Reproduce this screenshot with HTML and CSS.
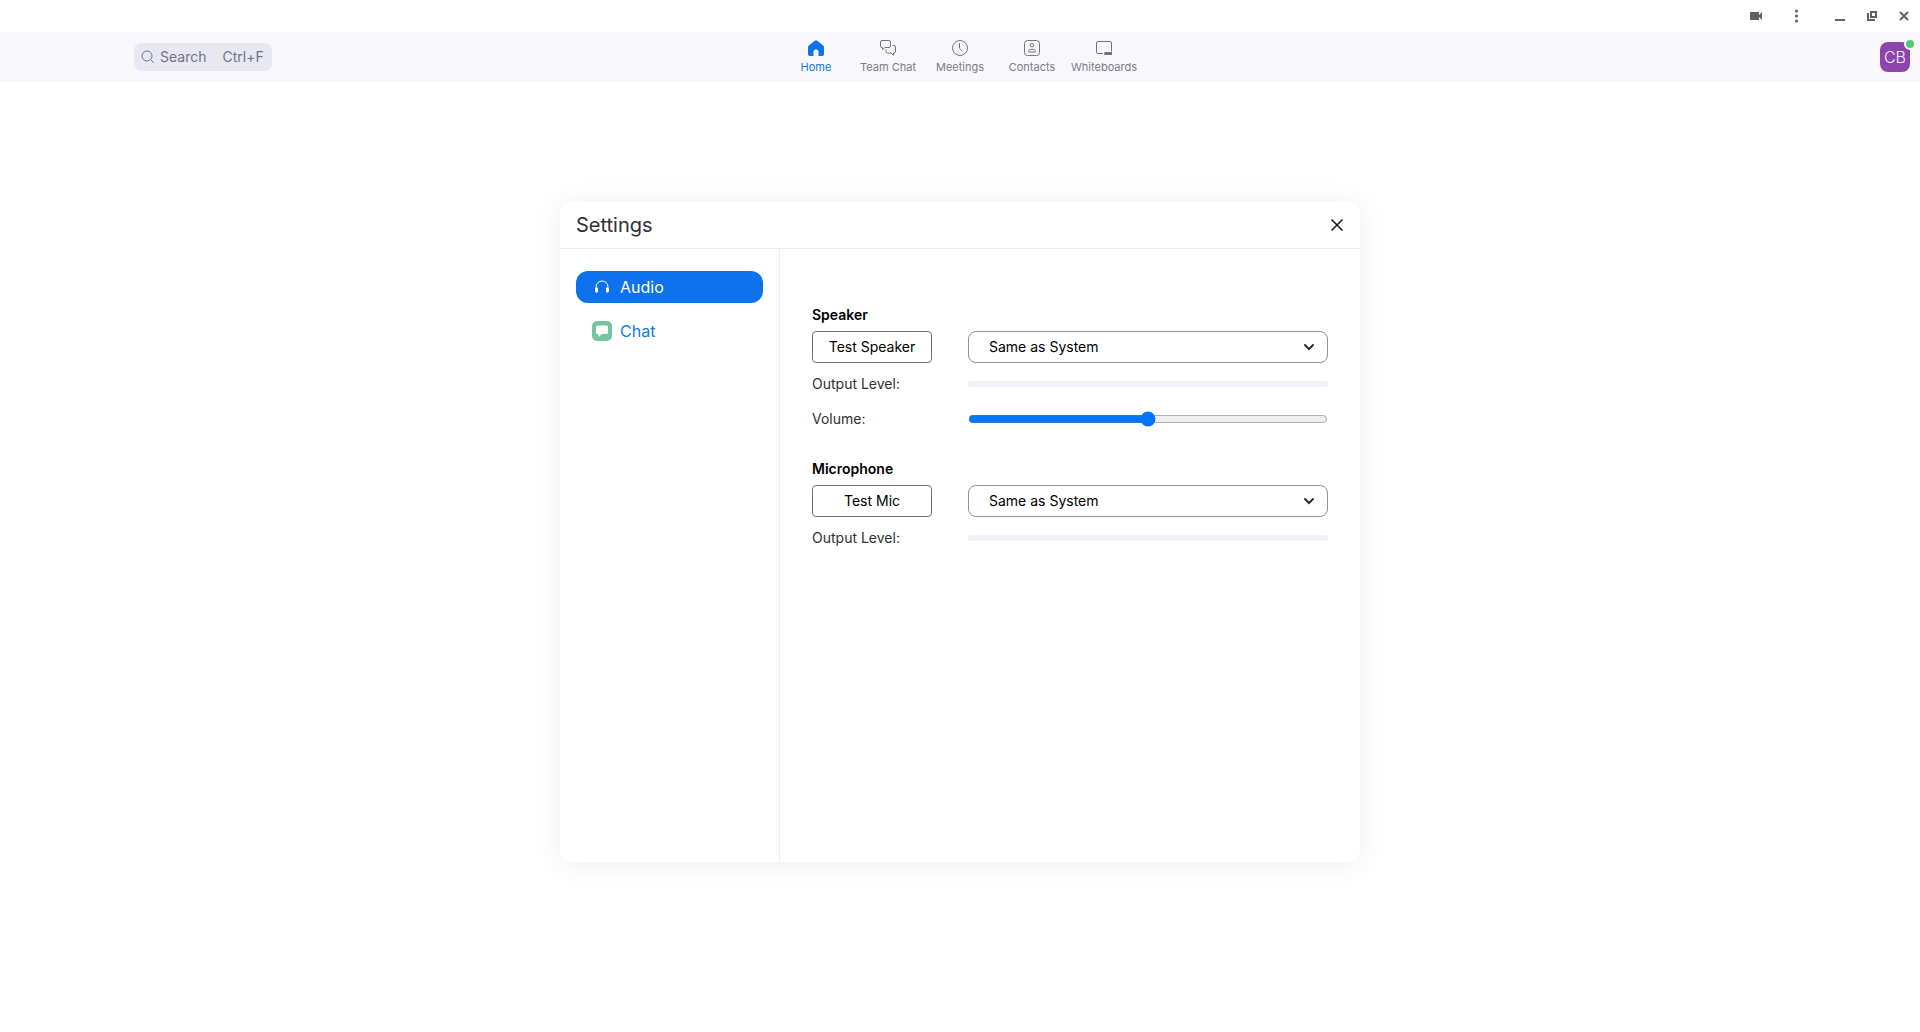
FILE: index.html
```html
<!DOCTYPE html>
<html lang="en">
<head>
    <meta charset="UTF-8">
    <meta name="viewport" content="width=device-width, initial-scale=1.0">
    <title>Settings</title>
    <link rel="stylesheet" href="styles.css">
</head>
<body>
    <div class="titlebar">
        <button class="window-btn camera" aria-label="Camera">
            <svg width="16" height="16" viewBox="0 0 16 16"><path d="M2 4h9v3l3-3v8l-3-3v3H2z" fill="#5f6368"/></svg>
        </button>
        <button class="window-btn more" aria-label="More">
            <svg width="16" height="16" viewBox="0 0 16 16" fill="#5f6368"><circle cx="8.500" cy="3" r="1.600"/><circle cx="8.500" cy="8" r="1.600"/><circle cx="8.500" cy="13" r="1.600"/></svg>
        </button>
        <button class="window-btn" aria-label="Minimize">
            <svg width="16" height="16" viewBox="0 0 16 16"><path d="M3 11h10v2H3z" fill="#5f6368"/></svg>
        </button>
        <button class="window-btn" aria-label="Restore">
            <svg width="16" height="16" viewBox="0 0 16 16" fill="none" stroke="#5f6368" stroke-width="2"><path d="M7 4h5v5H7zM4 5v7h7"/></svg>
        </button>
        <button class="window-btn" aria-label="Close window">
            <svg width="16" height="16" viewBox="0 0 16 16" fill="none" stroke="#5f6368" stroke-width="2"><path d="M4 4l8 8M12 4l-8 8"/></svg>
        </button>
    </div>

    <div class="app">
        <header class="header">
            <button class="search">
                <svg width="14" height="14" viewBox="0 0 14 14" fill="none" stroke="#747480"><circle cx="6" cy="6" r="5"/><path d="M9.800 9.800l3 3"/></svg>
                <span>Search</span>
                <span class="shortcut">Ctrl+F</span>
            </button>
            <nav class="nav">
                <a href="#" class="nav-item active">
                    <svg width="16" height="16" viewBox="0 0 16 16"><path d="M8 .3c.5 0 .9.2 1.300.5l5.800 4.800c.6.5.9 1.100.9 1.900V14a2 2 0 0 1-2 2h-3.500v-4.500a2 2 0 0 0-2-2h-1a2 2 0 0 0-2 2V16H2a2 2 0 0 1-2-2V7.500c0-.8.3-1.400.9-1.900L6.700.8C7.100.5 7.500.3 8 .3z" fill="#0e72ed"/></svg>
                    <span>Home</span>
                </a>
                <a href="#" class="nav-item">
                    <svg width="16" height="16" viewBox="0 0 16 16" fill="none" stroke="#747480" stroke-linejoin="round"><path d="M2 .5h7a1.500 1.500 0 0 1 1.500 1.500v4A1.500 1.500 0 0 1 9 7.500H5L2.500 9.800V7.500H2A1.500 1.500 0 0 1 .5 6V2A1.500 1.500 0 0 1 2 .5z"/><path d="M12.500 5.500H14A1.500 1.500 0 0 1 15.500 7v4.500A1.500 1.500 0 0 1 14 13h-.5v2.400L11 13H7.500A1.500 1.500 0 0 1 6 11.500V9.500"/></svg>
                    <span>Team Chat</span>
                </a>
                <a href="#" class="nav-item">
                    <svg width="16" height="16" viewBox="0 0 16 16" fill="none" stroke="#747480"><circle cx="8" cy="8" r="7.500"/><path d="M7.500 3v5.200l3 3"/></svg>
                    <span>Meetings</span>
                </a>
                <a href="#" class="nav-item">
                    <svg width="16" height="16" viewBox="0 0 16 16" fill="none" stroke="#747480"><rect x=".5" y=".5" width="15" height="15" rx="3"/><circle cx="8" cy="5.200" r="1.700"/><path d="M4.500 12v-.5c0-1.400 1-2.200 2.200-2.200h2.600c1.200 0 2.200.8 2.200 2.200v.5z" stroke-linejoin="round"/></svg>
                    <span>Contacts</span>
                </a>
                <a href="#" class="nav-item">
                    <svg width="16" height="16" viewBox="0 0 16 16" fill="none" stroke="#747480"><path d="M7 13.500H2A1.500 1.500 0 0 1 .5 12V3A1.500 1.500 0 0 1 2 1.500h12A1.500 1.500 0 0 1 15.500 3v8.500"/><path d="M9.500 12H16v3H9.500a1.500 1.500 0 0 1 0-3z" fill="#747480" stroke="none"/></svg>
                    <span>Whiteboards</span>
                </a>
            </nav>
            <button class="avatar" aria-label="Profile">CB<span class="presence"></span></button>
        </header>

        <div class="overlay">
            <section class="settings" role="dialog" aria-labelledby="settings-title">
                <div class="settings-header">
                    <h1 id="settings-title">Settings</h1>
                    <button class="close" aria-label="Close">
                        <svg width="14" height="14" viewBox="0 0 14 14" fill="none" stroke="#131619" stroke-width="1.500"><path d="M1.500 1.500l11 11M12.500 1.500l-11 11"/></svg>
                    </button>
                </div>
                <div class="settings-body">
                    <nav class="sidebar">
                        <a href="#" class="side-item active">
                            <svg width="20" height="20" viewBox="0 0 20 20" fill="none" stroke="#fff"><path d="M4 11.500V10a6 6 0 0 1 12 0v1.500"/><path d="M4.700 10.500c.8 0 1.300.5 1.300 1.300v2.400c0 .8-.5 1.300-1.300 1.300-1 0-1.700-.8-1.700-1.800v-1.400c0-1 .7-1.800 1.700-1.800zM15.300 10.500c-.8 0-1.300.5-1.300 1.300v2.400c0 .8.5 1.300 1.300 1.300 1 0 1.700-.8 1.700-1.800v-1.400c0-1-.7-1.800-1.700-1.800z" fill="#fff" stroke="none"/></svg>
                            <span>Audio</span>
                        </a>
                        <a href="#" class="side-item">
                            <svg width="20" height="20" viewBox="0 0 20 20"><rect width="20" height="20" rx="5" fill="#75c3a3"/><path d="M5.500 4.500h9A1.500 1.500 0 0 1 16 6v5.500a1.500 1.500 0 0 1-1.500 1.500H10l-3.500 3V13h-1A1.500 1.500 0 0 1 4 11.500V6a1.500 1.500 0 0 1 1.500-1.500z" fill="#fff"/></svg>
                            <span>Chat</span>
                        </a>
                    </nav>
                    <div class="content">
                        <div class="group">
                            <h2 id="speaker">Speaker</h2>
                            <div class="row device">
                                <button class="test-btn">Test Speaker</button>
                                <div class="select">
                                    <select aria-labelledby="speaker">
                                        <option>Same as System</option>
                                    </select>
                                    <svg width="10" height="8" viewBox="0 0 10 8" fill="none" stroke="#2a2b33" stroke-width="2"><path d="M1 2l4 4 4-4" stroke-linecap="round"/></svg>
                                </div>
                            </div>
                            <div class="row">
                                <span>Output Level:</span>
                                <div class="level"></div>
                            </div>
                            <div class="row">
                                <label for="volume">Volume:</label>
                                <input type="range" id="volume" min="0" max="100" value="50">
                            </div>
                        </div>
                        <div class="group">
                            <h2 id="microphone">Microphone</h2>
                            <div class="row device">
                                <button class="test-btn">Test Mic</button>
                                <div class="select">
                                    <select aria-labelledby="microphone">
                                        <option>Same as System</option>
                                    </select>
                                    <svg width="10" height="8" viewBox="0 0 10 8" fill="none" stroke="#2a2b33" stroke-width="2"><path d="M1 2l4 4 4-4" stroke-linecap="round"/></svg>
                                </div>
                            </div>
                            <div class="row">
                                <span>Output Level:</span>
                                <div class="level"></div>
                            </div>
                        </div>
                    </div>
                </div>
            </section>
        </div>
    </div>
</body>
</html>
```
FILE: styles.css
```css
* {
    box-sizing: border-box;
}

body {
    margin: 0;
    min-height: 100vh;
    display: flex;
    flex-direction: column;
    background: #fff;
    color: #303033;
    font-family: Inter, "Liberation Sans", sans-serif;
    font-size: 14px;
    line-height: 20px;
}

button,
select {
    font: inherit;
    cursor: pointer;
}

a {
    text-decoration: none;
}

svg {
    display: block;
    flex: none;
}

/* window controls */
.titlebar {
    display: flex;
    justify-content: flex-end;
    align-items: center;
    gap: 16px;
    height: 32px;
    padding-right: 8px;
}

.window-btn {
    padding: 0;
    border: none;
    background: none;
}

.camera {
    margin-right: 8px;
}

.more {
    margin-right: 12px;
}

.app {
    position: relative;
    flex: 1;
}

/* top bar */
.header {
    display: grid;
    grid-template-columns: 1fr auto 1fr;
    align-items: center;
    height: 50px;
    padding: 0 10px;
    background: #f7f7fc;
}

.search {
    display: flex;
    align-items: center;
    justify-self: start;
    gap: 5px;
    height: 28px;
    margin-left: 124px;
    padding: 0 8px 0 7px;
    border: none;
    border-radius: 8px;
    background: #e8e8f2;
    color: #747480;
}

.shortcut {
    margin-left: 11px;
}

.nav {
    display: flex;
}

.nav-item {
    display: flex;
    flex-direction: column;
    align-items: center;
    gap: 4px;
    width: 72px;
    color: #7c7c86;
    font-size: 11px;
    line-height: 14px;
}

.nav-item.active {
    color: #0e78e0;
}

.avatar {
    position: relative;
    justify-self: end;
    width: 30px;
    height: 30px;
    padding: 0;
    border: none;
    border-radius: 8px;
    background: #8e44ad;
    color: #f6eefa;
    font-size: 16px;
    font-weight: 300;
}

.presence {
    position: absolute;
    top: -4px;
    right: -6px;
    width: 12px;
    height: 12px;
    border: 2px solid #f7f7fc;
    border-radius: 50%;
    background: #4fc878;
}

/* settings dialog */
.overlay {
    position: absolute;
    inset: 0;
    display: flex;
    justify-content: center;
    align-items: center;
    pointer-events: none;
}

.settings {
    display: flex;
    flex-direction: column;
    width: 100%;
    max-width: 800px;
    height: 66%;
    border-radius: 12px;
    background: #fff;
    box-shadow: 0 2px 30px rgba(0, 0, 0, 0.07);
    pointer-events: auto;
}

.settings-header {
    display: flex;
    justify-content: space-between;
    align-items: center;
    height: 47px;
    padding: 0 16px;
    border-bottom: 1px solid #ededf4;
}

.settings-header h1 {
    margin: 0;
    font-size: 20px;
    font-weight: 400;
    line-height: 24px;
}

.close {
    padding: 0;
    border: none;
    background: none;
}

.settings-body {
    flex: 1;
    display: flex;
}

.sidebar {
    display: flex;
    flex-direction: column;
    gap: 12px;
    width: 220px;
    padding: 22px 16px;
    border-right: 1px solid #ededf4;
}

.side-item {
    display: flex;
    align-items: center;
    gap: 8px;
    height: 32px;
    padding: 0 16px;
    border-radius: 12px;
    color: #0e7ce4;
    font-size: 16px;
}

.side-item.active {
    background: #0e72ed;
    color: #fff;
}

.content {
    flex: 1;
    padding: 56px 32px;
}

.group {
    margin-bottom: 30px;
}

.group h2 {
    margin: 0 0 6px;
    color: #000;
    font-size: 14px;
    font-weight: 600;
    line-height: 20px;
}

.row {
    display: grid;
    grid-template-columns: 120px 1fr;
    align-items: center;
    gap: 36px;
    margin-bottom: 15px;
}

.device {
    margin-bottom: 11px;
}

.test-btn {
    height: 32px;
    padding: 0;
    border: 1px solid #767676;
    border-radius: 4px;
    background: #fff;
    color: #000;
}

.select {
    position: relative;
}

.select select {
    display: block;
    width: 100%;
    height: 32px;
    padding: 0 32px 0 20px;
    border: 1px solid #909096;
    border-radius: 8px;
    appearance: none;
    background: #fff;
    color: #000;
}

.select svg {
    position: absolute;
    top: 12px;
    right: 14px;
    pointer-events: none;
}

.level {
    height: 6px;
    border-radius: 3px;
    background: #f1f1f7;
}

input[type="range"] {
    margin: 0;
    accent-color: #0075ff;
}
```
